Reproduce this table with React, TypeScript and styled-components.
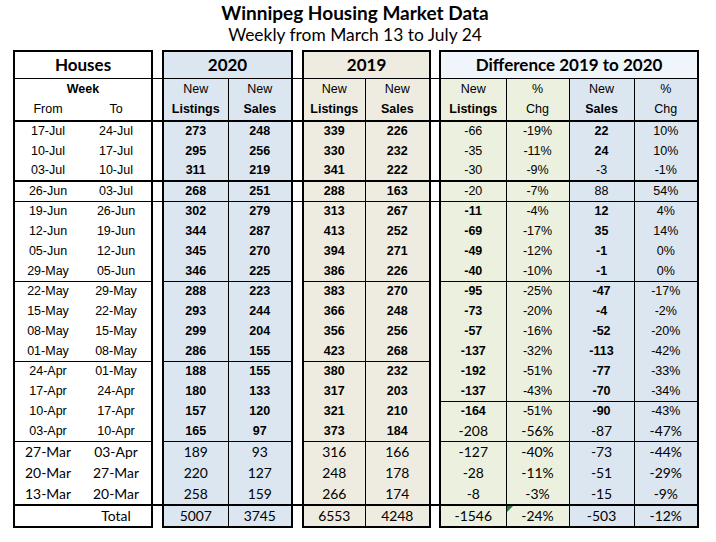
import React from 'react';
import styled, { createGlobalStyle, css } from 'styled-components';

const GlobalStyle = createGlobalStyle`
  html, body { margin: 0; padding: 0; background: #ffffff; }
  body { font-family: "Liberation Sans", Arial, sans-serif; color: #000; }
`;

const BLUE = '#dce6f1';
const BEIGE = '#eeece1';
const GREEN = '#ebf1de';
const PALE = '#eff5fb';
const WHITE = '#ffffff';

type FontKind = 'a' | 'A' | 'c' | 'h';

const fonts: Record<FontKind, ReturnType<typeof css>> = {
  a: css`font-family: "Liberation Sans", Arial, sans-serif; font-size: 12.5px; font-weight: 400;`,
  A: css`font-family: "Liberation Sans", Arial, sans-serif; font-size: 12.5px; font-weight: 700;`,
  c: css`font-family: Lato, "Open Sans", sans-serif; font-size: 13.9px; font-weight: 400;`,
  h: css`font-family: Lato, "Open Sans", sans-serif; font-size: 17px; font-weight: 700;`,
};

const Page = styled.div`
  width: 716px;
  height: 542px;
  box-sizing: border-box;
  padding: 1px 0 0 13px;
`;

const Title = styled.h1`
  margin: 0;
  width: 684px;
  text-align: center;
  font-family: Lato, "Open Sans", sans-serif;
  font-weight: 700;
  font-size: 19px;
  line-height: 23px;
`;

const Subtitle = styled.div`
  width: 684px;
  text-align: center;
  font-family: Lato, "Open Sans", sans-serif;
  font-size: 17.4px;
  line-height: 21px;
`;

const Table = styled.table`
  border-collapse: collapse;
  table-layout: fixed;
  width: 684px;
  margin-top: 5px;
`;

const Col = styled.col<{ $w: number }>`
  width: ${(p) => p.$w}px;
`;

const Row = styled.tr<{ $h: number }>`
  height: ${(p) => p.$h}px;
`;

const Cell = styled.td<{
  $bg?: string;
  $l?: number;
  $r?: number;
  $t?: number;
  $b?: number;
  $font?: FontKind;
  $flag?: boolean;
}>`
  padding: 0;
  text-align: center;
  vertical-align: middle;
  white-space: nowrap;
  line-height: 1;
  background: ${(p) => p.$bg || 'transparent'};
  border-left: ${(p) => (p.$l ? `${p.$l}px solid #000` : 'none')};
  border-right: ${(p) => (p.$r ? `${p.$r}px solid #000` : 'none')};
  border-top: ${(p) => (p.$t ? `${p.$t}px solid #000` : 'none')};
  border-bottom: ${(p) => (p.$b ? `${p.$b}px solid #000` : 'none')};
  ${(p) => fonts[p.$font || 'a']}
  ${(p) =>
    p.$flag &&
    css`
      position: relative;
      &::before {
        content: '';
        position: absolute;
        left: 0;
        top: 0;
        border-top: 6px solid #217a3c;
        border-right: 6px solid transparent;
      }
    `}
`;

type ColSpec = { bg: string; l: number; r: number };

const COLS: ColSpec[] = [
  { bg: WHITE, l: 2, r: 0 },
  { bg: WHITE, l: 0, r: 2 },
  { bg: BLUE, l: 2, r: 1 },
  { bg: BLUE, l: 1, r: 2 },
  { bg: BEIGE, l: 2, r: 1 },
  { bg: BEIGE, l: 1, r: 2 },
  { bg: GREEN, l: 2, r: 1 },
  { bg: GREEN, l: 1, r: 1 },
  { bg: BLUE, l: 1, r: 1 },
  { bg: BLUE, l: 1, r: 2 },
];

const rows: string[][] = [
  ['17-Jul', '24-Jul', '273', '248', '339', '226', '-66', '-19%', '22', '10%'],
  ['10-Jul', '17-Jul', '295', '256', '330', '232', '-35', '-11%', '24', '10%'],
  ['03-Jul', '10-Jul', '311', '219', '341', '222', '-30', '-9%', '-3', '-1%'],
  ['26-Jun', '03-Jul', '268', '251', '288', '163', '-20', '-7%', '88', '54%'],
  ['19-Jun', '26-Jun', '302', '279', '313', '267', '-11', '-4%', '12', '4%'],
  ['12-Jun', '19-Jun', '344', '287', '413', '252', '-69', '-17%', '35', '14%'],
  ['05-Jun', '12-Jun', '345', '270', '394', '271', '-49', '-12%', '-1', '0%'],
  ['29-May', '05-Jun', '346', '225', '386', '226', '-40', '-10%', '-1', '0%'],
  ['22-May', '29-May', '288', '223', '383', '270', '-95', '-25%', '-47', '-17%'],
  ['15-May', '22-May', '293', '244', '366', '248', '-73', '-20%', '-4', '-2%'],
  ['08-May', '15-May', '299', '204', '356', '256', '-57', '-16%', '-52', '-20%'],
  ['01-May', '08-May', '286', '155', '423', '268', '-137', '-32%', '-113', '-42%'],
  ['24-Apr', '01-May', '188', '155', '380', '232', '-192', '-51%', '-77', '-33%'],
  ['17-Apr', '24-Apr', '180', '133', '317', '203', '-137', '-43%', '-70', '-34%'],
  ['10-Apr', '17-Apr', '157', '120', '321', '210', '-164', '-51%', '-90', '-43%'],
  ['03-Apr', '10-Apr', '165', '97', '373', '184', '-208', '-56%', '-87', '-47%'],
  ['27-Mar', '03-Apr', '189', '93', '316', '166', '-127', '-40%', '-73', '-44%'],
  ['20-Mar', '27-Mar', '220', '127', '248', '178', '-28', '-11%', '-51', '-29%'],
  ['13-Mar', '20-Mar', '258', '159', '266', '174', '-8', '-3%', '-15', '-9%'],
];

const rowHeight = (r: number) => (r < 16 ? 20 : r === 17 ? 22 : 21);

const fontFor = (r: number, c: number): FontKind => {
  if (r >= 16) return 'c';
  if (c <= 1) return 'a';
  if (c <= 5) return 'A';
  if (r === 15) return 'c';
  if (c === 7 || c === 9) return 'a';
  if (c === 6) return r <= 3 ? 'a' : 'A';
  if (c === 8) return r === 2 || r === 3 ? 'a' : 'A';
  return 'a';
};

// bottom border widths per data row
const mainBottom = (r: number) => (r === 2 || r === 18 ? 2 : [3, 7, 11, 15].includes(r) ? 1 : 0);
const diffBottom = (r: number) => (r === 2 || r === 18 ? 2 : [3, 7, 13, 15].includes(r) ? 1 : 0);
const gapBottom = (r: number) => (r === 2 || r === 18 ? 2 : r === 3 ? 1 : 0);

const Gap: React.FC<{ b?: number }> = ({ b }) => <Cell $b={b} />;

const SectionHead: React.FC<{ bg: string; span: number; children: React.ReactNode }> = ({ bg, span, children }) => (
  <Cell colSpan={span} $bg={bg} $l={2} $r={2} $t={2} $b={1} $font="h">
    {children}
  </Cell>
);

const insertGaps = (cells: React.ReactNode[], gapB: number, keyBase: string) => {
  const out: React.ReactNode[] = [];
  cells.forEach((c, i) => {
    out.push(c);
    if (i === 1 || i === 3 || i === 5) out.push(<Gap key={`${keyBase}-g${i}`} b={gapB} />);
  });
  return out;
};

export default function App() {
  return (
    <>
      <GlobalStyle />
      <Page>
        <Title>Winnipeg Housing Market Data</Title>
        <Subtitle>Weekly from March 13 to July 24</Subtitle>
        <Table>
          <colgroup>
            <Col $w={67} />
            <Col $w={71} />
            <Col $w={11} />
            <Col $w={65} />
            <Col $w={64} />
            <Col $w={11} />
            <Col $w={62} />
            <Col $w={65} />
            <Col $w={10} />
            <Col $w={66} />
            <Col $w={63} />
            <Col $w={65} />
            <Col $w={64} />
          </colgroup>
          <tbody>
            <Row $h={27}>
              <SectionHead bg={WHITE} span={2}>Houses</SectionHead>
              <Gap b={1} />
              <SectionHead bg={BLUE} span={2}>2020</SectionHead>
              <Gap b={1} />
              <SectionHead bg={BEIGE} span={2}>2019</SectionHead>
              <Gap b={1} />
              <SectionHead bg={PALE} span={4}>Difference 2019 to 2020</SectionHead>
            </Row>
            <Row $h={21}>
              <Cell colSpan={2} $l={2} $r={2} $font="A">Week</Cell>
              <Gap />
              {COLS.slice(2).flatMap((c, i) => {
                const label = i === 5 || i === 7 ? '%' : 'New';
                const cell = (
                  <Cell key={`n${i}`} $bg={c.bg} $l={c.l} $r={c.r} $font="a">
                    {label}
                  </Cell>
                );
                return i === 1 || i === 3 ? [cell, <Gap key={`ng${i}`} />] : [cell];
              })}
            </Row>
            <Row $h={22}>
              {insertGaps(
                COLS.map((c, i) => {
                  const labels = ['From', 'To', 'Listings', 'Sales', 'Listings', 'Sales', 'Listings', 'Chg', 'Sales', 'Chg'];
                  const bold = i >= 2 && labels[i] !== 'Chg';
                  return (
                    <Cell key={`s${i}`} $bg={c.bg} $l={c.l} $r={c.r} $b={2} $font={bold ? 'A' : 'a'}>
                      {labels[i]}
                    </Cell>
                  );
                }),
                2,
                'sub'
              )}
            </Row>
            {rows.map((row, r) => (
              <Row key={r} $h={rowHeight(r)}>
                {insertGaps(
                  row.map((v, c) => {
                    const spec = COLS[c];
                    const b = c >= 6 ? diffBottom(r) : mainBottom(r);
                    return (
                      <Cell key={c} $bg={spec.bg} $l={spec.l} $r={spec.r} $b={b} $font={fontFor(r, c)}>
                        {v}
                      </Cell>
                    );
                  }),
                  gapBottom(r),
                  `r${r}`
                )}
              </Row>
            ))}
            <Row $h={22}>
              {insertGaps(
                ['', 'Total', '5007', '3745', '6553', '4248', '-1546', '-24%', '-503', '-12%'].map((v, c) => {
                  const spec = COLS[c];
                  return (
                    <Cell key={c} $bg={spec.bg} $l={spec.l} $r={spec.r} $b={2} $font="c" $flag={c === 7}>
                      {v}
                    </Cell>
                  );
                }),
                0,
                'tot'
              )}
            </Row>
          </tbody>
        </Table>
      </Page>
    </>
  );
}
